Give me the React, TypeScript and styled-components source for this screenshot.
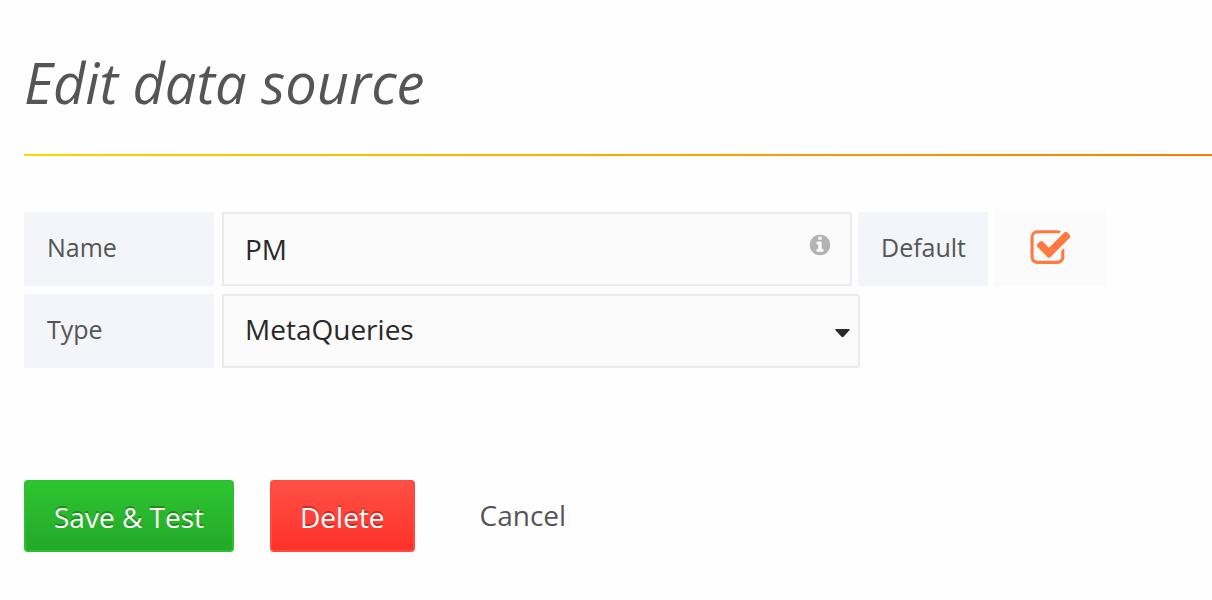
import React from "react";
import styled, { createGlobalStyle, css } from "styled-components";

const GlobalStyle = createGlobalStyle`
  *, *::before, *::after { box-sizing: border-box; }
  body {
    margin: 0;
    background: #fefefe;
    color: #555;
    font-family: "Open Sans", "Noto Sans", sans-serif;
    font-size: 28px;
  }
`;

const Page = styled.main`
  padding: 42px 0 48px 24px;
`;

const Title = styled.h1`
  margin: 0 0 32px;
  font-size: 56px;
  line-height: 80px;
  font-weight: 400;
  font-style: italic;
`;

const Divider = styled.hr`
  height: 2px;
  margin: 0 0 56px;
  border: 0;
  background: linear-gradient(to right, #ffd500, #ff7b00);
`;

const Form = styled.form`
  display: flex;
  flex-direction: column;
  gap: 8px;
`;

const Row = styled.div`
  display: flex;
  gap: 6px;
`;

const Field = styled.div<{ $basis: number }>`
  display: flex;
  gap: 8px;
  min-width: 0;
  flex: 0 1 ${(p) => p.$basis}px;
`;

const Label = styled.label<{ $wide?: boolean }>`
  flex: none;
  width: ${(p) => (p.$wide ? 190 : 130)}px;
  padding: 17px 0 21px 23px;
  border-radius: 3px 0 0 3px;
  background: #f3f5fa;
  font-size: 25px;
  line-height: 36px;
`;

const Control = styled.div`
  position: relative;
  flex: 1;
  min-width: 0;
`;

const controlBox = css`
  display: block;
  width: 100%;
  height: 74px;
  margin: 0;
  border: 2px solid #ebebeb;
  border-radius: 0 3px 3px 0;
  background: #fbfbfb;
  color: #292929;
  font: inherit;
`;

const TextInput = styled.input`
  ${controlBox}
  padding: 0 60px 0 21px;
`;

const Select = styled.select`
  ${controlBox}
  appearance: none;
  padding: 0 40px 4px 21px;
`;

const InfoIcon = styled.svg`
  position: absolute;
  top: 21px;
  right: 20px;
  width: 24px;
  height: 24px;
  fill: #b3b3b3;
`;

const Caret = styled.svg`
  position: absolute;
  top: 35px;
  right: 10px;
  width: 15px;
  height: 9px;
  fill: #292929;
  pointer-events: none;
`;

const CheckCell = styled.div`
  display: grid;
  place-items: center;
  flex: none;
  width: 112px;
  height: 74px;
  padding-bottom: 8px;
  background: #fbfbfb;
  > * { grid-area: 1 / 1; }
`;

const Checkbox = styled.input`
  appearance: none;
  width: 44px;
  height: 44px;
  margin: 0;
`;

const CheckIcon = styled.svg`
  width: 43px;
  height: 43px;
  fill: #ff7941;
  pointer-events: none;
`;

const Actions = styled.div`
  display: flex;
  align-items: flex-start;
  gap: 36px;
  margin-top: 104px;
`;

const Button = styled.button<{ $tone: "green" | "red" }>`
  height: 72px;
  padding: 2px 28px 0;
  border: 2px solid ${(p) => (p.$tone === "green" ? "#2ac12f" : "#ff4a42")};
  border-radius: 4px;
  background: ${(p) =>
    p.$tone === "green"
      ? "linear-gradient(#2dc530, #25a829)"
      : "linear-gradient(#ff5047, #ff3128)"};
  color: #fff;
  font: inherit;
  text-shadow: 0 -2px 0 rgba(0, 0, 0, 0.25);
  white-space: nowrap;
`;

const Cancel = styled.a`
  padding: 0 29px;
  color: #555;
  line-height: 70px;
  text-decoration: none;
`;

export default function App() {
  return (
    <>
      <GlobalStyle />
      <Page>
        <Title>Edit data source</Title>
        <Divider />
        <Form onSubmit={(e) => e.preventDefault()}>
          <Row>
            <Field $basis={828}>
              <Label $wide htmlFor="name">Name</Label>
              <Control>
                <TextInput id="name" type="text" defaultValue="PM" />
                <InfoIcon viewBox="0 0 1792 1792" aria-hidden="true">
                  <path d="M1152 1376v-160q0-14-9-23t-23-9h-96V672q0-14-9-23t-23-9H672q-14 0-23 9t-9 23v160q0 14 9 23t23 9h96v320h-96q-14 0-23 9t-9 23v160q0 14 9 23t23 9h448q14 0 23-9t9-23zm-128-896V320q0-14-9-23t-23-9H800q-14 0-23 9t-9 23v160q0 14 9 23t23 9h192q14 0 23-9t9-23zm640 416q0 209-103 385.500T1281.500 1561 896 1664t-385.500-103T231 1281.500 128 896t103-385.500T510.500 231 896 128t385.500 103T1561 510.500 1664 896z" />
                </InfoIcon>
              </Control>
            </Field>
            <Label htmlFor="default">Default</Label>
            <CheckCell>
              <Checkbox id="default" type="checkbox" defaultChecked />
              <CheckIcon viewBox="0 0 1792 1792" aria-hidden="true">
                <path d="M1472 1058v318q0 119-84.500 203.500T1184 1664H352q-119 0-203.500-84.500T64 1376V544q0-119 84.500-203.500T352 256h832q63 0 117 25 15 7 18 23 3 17-9 29l-49 49q-10 10-23 10-3 0-9-2-23-6-45-6H352q-66 0-113 47t-47 113v832q0 66 47 113t113 47h832q66 0 113-47t47-113v-254q0-13 9-22l64-64q10-10 23-10 6 0 12 3 20 8 20 29zm231-489l-814 814q-24 24-57 24t-57-24L345 953q-24-24-24-57t24-57l110-110q24-24 57-24t57 24l263 263 647-647q24-24 57-24t57 24l110 110q24 24 24 57t-24 57z" />
              </CheckIcon>
            </CheckCell>
          </Row>
          <Row>
            <Field $basis={836}>
              <Label $wide htmlFor="type">Type</Label>
              <Control>
                <Select id="type" defaultValue="MetaQueries">
                  <option>MetaQueries</option>
                </Select>
                <Caret viewBox="0 0 15 9" aria-hidden="true">
                  <path d="M1 0h13q1 0 .7 1L8.500 7.800q-1 .9-2 0L.3 1Q0 0 1 0z" />
                </Caret>
              </Control>
            </Field>
          </Row>
          <Actions>
            <Button $tone="green" type="submit">Save &amp; Test</Button>
            <Button $tone="red" type="button">Delete</Button>
            <Cancel href="#">Cancel</Cancel>
          </Actions>
        </Form>
      </Page>
    </>
  );
}
